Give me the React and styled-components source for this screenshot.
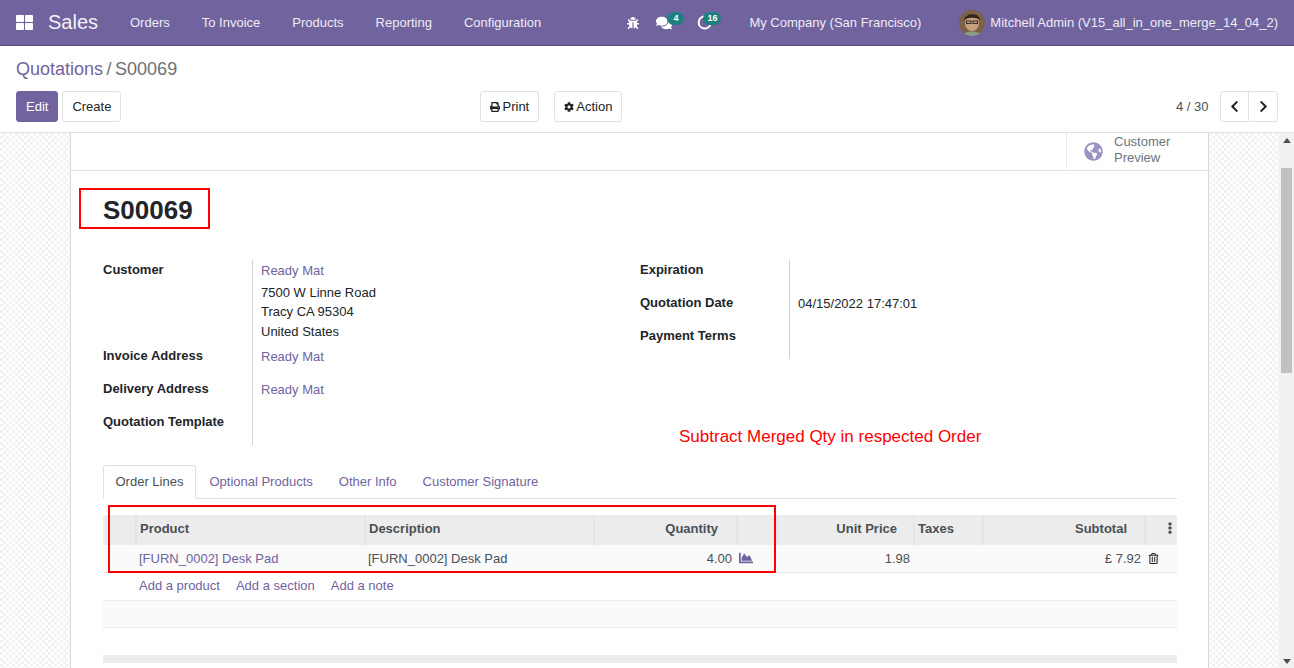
import React from "react";
import styled, { createGlobalStyle } from "styled-components";
import { FaBug, FaComments, FaPrint, FaCog, FaChevronLeft, FaChevronRight, FaGlobeAmericas, FaChartArea, FaRegTrashAlt, FaEllipsisV, FaThLarge } from "react-icons/fa";

const Global = createGlobalStyle`
  html, body { margin: 0; height: 100%; overflow: hidden; }
  body { font-family: "Liberation Sans", Arial, sans-serif; font-size: 13px; line-height: 19.5px; color: #212529; background: #fff; }
  * { box-sizing: border-box; }
`;
const Page = styled.div`width:1294px;height:668px;display:flex;flex-direction:column;overflow:hidden;`;
const Navbar = styled.header`height:46px;flex:none;background:#71639e;border-bottom:1px solid #5b4f7f;display:flex;align-items:center;color:#fff;`;
const Apps = styled.span`width:48px;padding-left:16px;display:flex;`;
const Brand = styled.span`font-size:20px;color:#f3f1f7;width:66px;`;
const NavItem = styled.span`padding:0 16px;color:#eeecf4;font-size:13px;`;
const Systray = styled.div`margin-left:auto;display:flex;align-items:center;height:100%;`;
const TrayIcon = styled.span`position:relative;display:flex;width:${p=>p.$w}px;`;
const Badge = styled.span`position:absolute;left:${p=>p.$l}px;top:${p=>p.$t}px;height:13px;min-width:17px;padding:0 4px;border-radius:7px;background:#1d7f80;color:#fff;font-size:9px;font-weight:700;line-height:13px;text-align:center;`;
const Company = styled.span`color:#eeecf4;margin-right:38px;`;
const Avatar = styled.svg`width:26px;height:26px;border-radius:50%;margin-right:5px;`;
const UserName = styled.span`color:#eeecf4;margin-right:16px;`;
const ControlPanel = styled.div`height:87px;flex:none;border-bottom:1px solid #dee2e6;padding:10px 16px 0;`;
const Crumbs = styled.div`font-size:18px;line-height:27px;color:#71639e;display:flex;gap:3.5px;`;
const Current = styled.span`color:#6c7075;`;
const Controls = styled.div`display:grid;grid-template-columns:464px 1fr auto;margin-top:8px;align-items:center;`;
const Group = styled.div`display:flex;gap:${p=>p.$gap||0}px;`;
const Btn = styled.button`height:31px;padding:0 9px;font:inherit;border-radius:3px;border:1px solid ${p=>p.$primary?"#71639e":"#dee2e6"};background:${p=>p.$primary?"#71639e":"#fff"};color:${p=>p.$primary?"#fff":"#212529"};display:flex;align-items:center;gap:2.5px;`;
const Pager = styled.div`display:flex;align-items:center;gap:11px;color:#495057;`;
const PagerBtns = styled.div`display:flex;`;
const PagerBtn = styled.button`width:${p=>p.$r?"30px":"29.5px"};height:31px;background:#fff;border:1px solid #dee2e6;border-radius:${p=>p.$r?"0 3px 3px 0":"3px 0 0 3px"};margin-left:${p=>p.$r?"-1px":"0"};display:flex;align-items:center;justify-content:center;padding:0;color:#212529;`;
const Content = styled.div`flex:1;display:flex;min-height:0;`;
const Canvas = styled.main`flex:1;min-width:0;padding:0 70px;background-color:#fff;background-image:conic-gradient(#f2f2f2 25%,#fff 0 50%,#f2f2f2 0 75%,#fff 0);background-size:6px 6px;`;
const Sheet = styled.section`position:relative;width:1139px;height:540px;background:#fff;border-left:1px solid #d6d8e0;border-right:1px solid #d6d8e0;`;
const ButtonBox = styled.div`height:38px;border-bottom:1px solid #dee2e6;display:flex;justify-content:flex-end;`;
const StatBtn = styled.div`width:142px;border-left:1px solid #e9ecef;display:flex;align-items:center;padding-left:17px;gap:11px;color:#6c757d;line-height:16px;`;
const StatLabel = styled.span`margin-bottom:4px;`;
const SheetBody = styled.div`padding:19px 31px 0 32px;`;
const Title = styled.h1`margin:0;font-size:26px;line-height:40px;font-weight:700;color:#212529;`;
const Fields = styled.div`display:grid;grid-template-columns:537px 1fr;margin-top:30px;height:185px;`;
const FieldGrid = styled.div`display:grid;grid-template-columns:149px 1fr;align-content:start;`;
const Label = styled.div`font-weight:700;height:${p=>p.$h||33}px;`;
const Value = styled.div`border-left:1px solid #ced4da;padding-left:8px;height:${p=>p.$h||33}px;padding-top:1px;color:${p=>p.$link?"#71639e":"#212529"};`;
const AddrLine = styled.div`color:#212529;`;
const AddrLink = styled.div`color:#71639e;margin-bottom:2px;`;
const Tabs = styled.div`display:flex;height:34px;margin-top:20px;border-bottom:1px solid #dee2e6;`;
const Tab = styled.div`padding:7px 13px 0;height:34px;color:${p=>p.$active?"#495057":"#71639e"};${p=>p.$active?"background:#fff;border:1px solid #dee2e6;border-bottom-color:#fff;border-radius:3px 3px 0 0;padding:6px 12px 0 11.5px;":""}`;
const Table = styled.table`width:1074px;table-layout:fixed;border-collapse:collapse;margin-top:16px;`;
const Th = styled.th`height:30px;padding:0 ${p=>p.$pr??3}px 3px 3px;background:#ececec;color:#495057;font-weight:700;text-align:${p=>p.$pr!==undefined?"right":"left"};border-left:${p=>p.$plain?"0":"2px solid #e3e4e6"};`;
const MenuTh = styled(Th)`text-align:right;padding:0 1px 1px 0;`;
const Td = styled.td`height:27px;padding:1px ${p=>p.$pr??4}px 0 ${p=>p.$pl??3}px;background:#fafafa;text-align:${p=>p.$end?"right":"left"};color:${p=>p.$link?"#71639e":"#495057"};border-bottom:1px solid #e4e6e9;`;
const CellIcon = styled.span`display:inline-flex;position:relative;top:${p=>p.$drop}px;`;
const AddRow = styled.div`height:28px;padding-left:36px;display:flex;gap:16px;align-items:center;color:#71639e;border-bottom:1px solid #e9ecef;`;
const Stripe = styled.div`height:27px;background:#fafafa;border-bottom:1px solid #e9ecef;`;
const Blank = styled.div`height:27px;`;
const Foot = styled.div`height:8px;background:#ececec;`;
const RedBox = styled.div`position:absolute;left:${p=>p.$x}px;top:${p=>p.$y}px;width:${p=>p.$w}px;height:${p=>p.$h}px;border:2px solid #f00;pointer-events:none;`;
const Note = styled.div`position:absolute;left:608px;top:292px;color:#f00;font-size:17px;line-height:24px;white-space:nowrap;`;
const Scrollbar = styled.div`width:15px;flex:none;background:#f1f1f1;display:flex;flex-direction:column;align-items:center;position:relative;`;
const Arrow = styled.span`width:0;height:0;border-left:4px solid transparent;border-right:4px solid transparent;${p=>p.$down?"border-top:5px solid #505050;position:absolute;bottom:4px;":"border-bottom:5px solid #505050;margin-top:5px;"}`;
const Thumb = styled.div`width:11px;height:205px;background:#c1c1c1;margin-top:25px;`;

function Crescent(){return <svg width="15" height="15" viewBox="0 0 15 15"><path d="M7 1.5a6 6 0 1 0 6.5 7.5" fill="none" stroke="#fff" strokeWidth="2"/></svg>;}

export default function App(){
  return <Page><Global/>
    <Navbar>
      <Apps><FaThLarge size={17} color="#fff"/></Apps>
      <Brand>Sales</Brand>
      <NavItem>Orders</NavItem><NavItem>To Invoice</NavItem><NavItem>Products</NavItem><NavItem>Reporting</NavItem><NavItem>Configuration</NavItem>
      <Systray>
        <TrayIcon $w={29}><FaBug size={12}/></TrayIcon>
        <TrayIcon $w={41}><FaComments size={16}/><Badge $l={11} $t={-3}>4</Badge></TrayIcon>
        <TrayIcon $w={52}><Crescent/><Badge $l={6} $t={-3}>16</Badge></TrayIcon>
        <Company>My Company (San Francisco)</Company>
        <Avatar viewBox="0 0 26 26"><rect width="26" height="26" fill="#7a6148"/><ellipse cx="13" cy="13" rx="7" ry="8" fill="#c99f80"/><path d="M5 10c1-7 15-8 16 0-4-3-11-3-16 0z" fill="#33261d"/><rect x="7.5" y="11" width="4.5" height="2.5" fill="none" stroke="#3a2c22"/><rect x="14" y="11" width="4.5" height="2.5" fill="none" stroke="#3a2c22"/><path d="M3 26c1-6 19-6 20 0z" fill="#8a9a88"/></Avatar>
        <UserName>Mitchell Admin (V15_all_in_one_merge_14_04_2)</UserName>
      </Systray>
    </Navbar>
    <ControlPanel>
      <Crumbs><span>Quotations</span><Current>/</Current><Current>S00069</Current></Crumbs>
      <Controls>
        <Group $gap={4}><Btn $primary>Edit</Btn><Btn>Create</Btn></Group>
        <Group $gap={14.5}><Btn><FaPrint size={10}/>Print</Btn><Btn><FaCog size={10}/>Action</Btn></Group>
        <Pager><span>4 / 30</span><PagerBtns><PagerBtn><FaChevronLeft size={13}/></PagerBtn><PagerBtn $r><FaChevronRight size={13}/></PagerBtn></PagerBtns></Pager>
      </Controls>
    </ControlPanel>
    <Content>
      <Canvas>
        <Sheet>
          <ButtonBox><StatBtn><FaGlobeAmericas size={19} color="#9b94c2"/><StatLabel>Customer<br/>Preview</StatLabel></StatBtn></ButtonBox>
          <SheetBody>
            <Title>S00069</Title>
            <Fields>
              <FieldGrid>
                <Label $h={86}>Customer</Label>
                <Value $h={86}><AddrLink>Ready Mat</AddrLink><AddrLine>7500 W Linne Road</AddrLine><AddrLine>Tracy CA 95304</AddrLine><AddrLine>United States</AddrLine></Value>
                <Label>Invoice Address</Label><Value $link>Ready Mat</Value>
                <Label>Delivery Address</Label><Value $link>Ready Mat</Value>
                <Label>Quotation Template</Label><Value/>
              </FieldGrid>
              <FieldGrid>
                <Label>Expiration</Label><Value/>
                <Label>Quotation Date</Label><Value>04/15/2022 17:47:01</Value>
                <Label>Payment Terms</Label><Value/>
              </FieldGrid>
            </Fields>
            <Tabs><Tab $active>Order Lines</Tab><Tab>Optional Products</Tab><Tab>Other Info</Tab><Tab>Customer Signature</Tab></Tabs>
            <Table>
              <colgroup><col width="33"/><col width="229"/><col width="229"/><col width="143"/><col width="40"/><col width="137"/><col width="69"/><col width="162"/><col width="32"/></colgroup>
              <thead><tr><Th $plain/><Th>Product</Th><Th>Description</Th><Th $pr={18}>Quantity</Th><Th/><Th $pr={16}>Unit Price</Th><Th>Taxes</Th><Th $pr={17}>Subtotal</Th><MenuTh><FaEllipsisV size={12}/></MenuTh></tr></thead>
              <tbody><tr><Td/><Td $link>[FURN_0002] Desk Pad</Td><Td>[FURN_0002] Desk Pad</Td><Td $end $pr={5}>4.00</Td><Td $link $pl={2}><CellIcon $drop={2}><FaChartArea size={14}/></CellIcon></Td><Td $end>1.98</Td><Td/><Td $end>£ 7.92</Td><Td><CellIcon $drop={1}><FaRegTrashAlt size={11} color="#212529"/></CellIcon></Td></tr></tbody>
            </Table>
            <AddRow><span>Add a product</span><span>Add a section</span><span>Add a note</span></AddRow>
            <Stripe/><Blank/><Foot/>
          </SheetBody>
          <RedBox $x={8} $y={55} $w={131} $h={41}/>
          <RedBox $x={37} $y={372} $w={668} $h={68}/>
          <Note>Subtract Merged Qty in respected Order</Note>
        </Sheet>
      </Canvas>
      <Scrollbar><Arrow/><Thumb/><Arrow $down/></Scrollbar>
    </Content>
  </Page>;
}
